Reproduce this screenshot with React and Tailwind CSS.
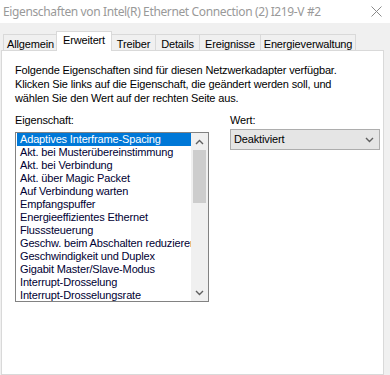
import { useState } from "react";

const tabs = [
  { label: "Allgemein", w: "w-[54px]" },
  { label: "Erweitert", w: "w-[56px]" },
  { label: "Treiber", w: "w-[44px]" },
  { label: "Details", w: "w-[44px]" },
  { label: "Ereignisse", w: "w-[61px]" },
  { label: "Energieverwaltung", w: "w-[96px]" },
];

const props = [
  "Adaptives Interframe-Spacing",
  "Akt. bei Musterübereinstimmung",
  "Akt. bei Verbindung",
  "Akt. über Magic Packet",
  "Auf Verbindung warten",
  "Empfangspuffer",
  "Energieeffizientes Ethernet",
  "Flusssteuerung",
  "Geschw. beim Abschalten reduzieren",
  "Geschwindigkeit und Duplex",
  "Gigabit Master/Slave-Modus",
  "Interrupt-Drosselung",
  "Interrupt-Drosselungsrate",
];

function Chevron({ up }) {
  return (
    <svg width="9" height="6" viewBox="0 0 9 6">
      <polyline
        points={up ? "1,5 4.5,1.5 8,5" : "1,1 4.5,4.5 8,1"}
        fill="none"
        stroke="#606060"
        strokeWidth="1.4"
      />
    </svg>
  );
}

export default function App() {
  const [active, setActive] = useState(1);
  const [selected, setSelected] = useState(0);

  return (
    <div className="w-[390px] h-[375px] bg-[#f0f0f0] overflow-hidden flex flex-col font-['Liberation_Sans',Arial,sans-serif] text-[11px] tracking-[-0.15px] text-black">
      {/* Titelleiste */}
      <div className="h-[23px] bg-white flex items-center justify-between pl-[3px] pr-[8px] shrink-0">
        <span className="font-['Noto_Sans',sans-serif] text-[12px] text-[#999999] tracking-[-0.37px] leading-none">
          Eigenschaften von Intel(R) Ethernet Connection (2) I219-V #2
        </span>
        <svg width="11" height="11" viewBox="0 0 11 11">
          <path d="M0.5 0.5 L10.5 10.5 M10.5 0.5 L0.5 10.5" stroke="#8a8a8a" strokeWidth="1" />
        </svg>
      </div>

      {/* Reiter */}
      <div className="mt-[8px] h-[20px] -mb-px pl-[3px] flex items-end relative z-10 shrink-0">
        {tabs.map((t, i) =>
          i === active ? (
            <button
              key={t.label}
              onClick={() => setActive(i)}
              className={`${t.w} h-[20px] bg-white border-l border-t border-r border-[#d9d9d9] pb-[3px] -mx-px relative z-10`}
            >
              {t.label}
            </button>
          ) : (
            <button
              key={t.label}
              onClick={() => setActive(i)}
              className={`${t.w} h-[17px] bg-[#f0f0f0] border-l border-t border-[#d9d9d9] last:border-r pt-[1px] border-b`}
            >
              {t.label}
            </button>
          )
        )}
      </div>

      {/* Inhalt */}
      <div className="ml-[1px] w-[383px] flex-1 bg-white border border-[#d9d9d9] pl-[13px] pt-[12px]">
        <p className="leading-[14px]">
          Folgende Eigenschaften sind für diesen Netzwerkadapter verfügbar.
          <br />
          Klicken Sie links auf die Eigenschaft, die geändert werden soll, und
          <br />
          wählen Sie den Wert auf der rechten Seite aus.
        </p>

        <div className="mt-[8px] flex gap-[21px]">
          <div className="w-[194px]">
            <div className="leading-[14px]">Eigenschaft:</div>
            <div className="mt-[5px] h-[170px] border border-[#828282] flex">
              <div className="flex-1 pl-[1px] overflow-hidden">
                {props.map((p, i) => (
                  <div
                    key={p}
                    onClick={() => setSelected(i)}
                    className={`h-[13px] leading-[13px] pl-[3px] whitespace-nowrap ${
                      selected === i ? "bg-[#0078d7] text-white" : "text-[#000033]"
                    }`}
                  >
                    {p}
                  </div>
                ))}
              </div>
              <div className="w-[17px] bg-[#f0f0f0] flex flex-col items-center shrink-0">
                <div className="h-[17px] flex items-center justify-center">
                  <Chevron up />
                </div>
                <div className="w-[13px] h-[53px] bg-[#cdcdcd]" />
                <div className="flex-1" />
                <div className="h-[17px] flex items-center justify-center">
                  <Chevron />
                </div>
              </div>
            </div>
          </div>

          <div className="w-[150px]">
            <div className="leading-[14px]">Wert:</div>
            <div className="mt-[2px] h-[21px] bg-[#e5e5e5] border border-[#adadad] flex items-center justify-between pl-[3px] pr-[5px]">
              <span>Deaktiviert</span>
              <Chevron />
            </div>
          </div>
        </div>
      </div>
    </div>
  );
}
